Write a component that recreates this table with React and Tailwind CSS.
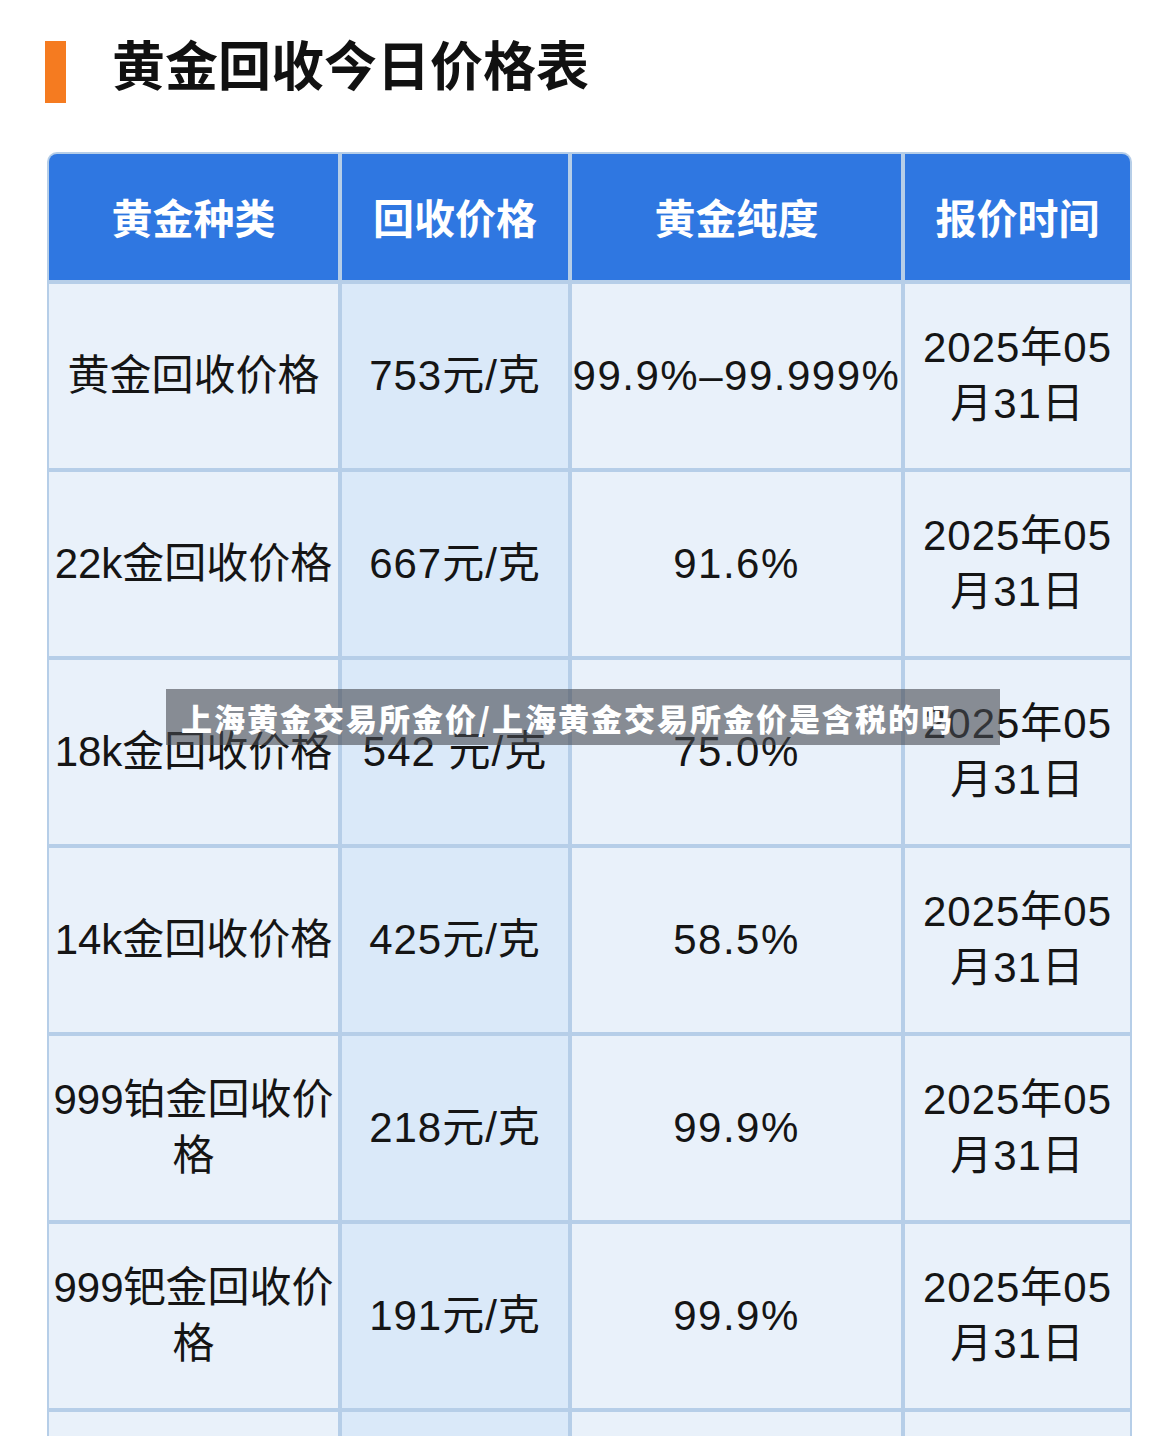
import React from 'react';

const rows = [
    { name: '黄金回收价格', price: '753元/克', purity: '99.9%–99.999%', date: true },
    { name: '22k金回收价格', price: '667元/克', purity: '91.6%', date: true },
    { name: '18k金回收价格', price: '542 元/克', purity: '75.0%', date: true },
    { name: '14k金回收价格', price: '425元/克', purity: '58.5%', date: true },
    { name: '999铂金回收价格', price: '218元/克', purity: '99.9%', date: true },
    { name: '999钯金回收价格', price: '191元/克', purity: '99.9%', date: true },
    { name: '', price: '', purity: '', date: false },
];

const headers = ['黄金种类', '回收价格', '黄金纯度', '报价时间'];

function Cell({ children, tint }) {
    return (
        <div className={`h-[184px] flex items-center justify-center text-center text-[42px] leading-[56px] text-[#151515] ${tint ? 'bg-[#dae9f9]' : 'bg-[#e9f1fa]'}`}>
            {children}
        </div>
    );
}

export default function App() {
    return (
        <div className="relative w-[1167px] h-[1436px] overflow-hidden bg-white font-['Liberation_Sans','Noto_Sans_CJK_SC',sans-serif]">
            <div className="flex items-start pl-[45px] pt-[41px]">
                <div className="w-[21px] h-[62px] bg-[#f57b20]" />
                <h1 className="ml-[46px] -mt-[4px] text-[53px] leading-none font-bold text-[#111] font-['Noto_Sans_CJK_SC',sans-serif]">
                    黄金回收今日价格表
                </h1>
            </div>

            <div className="ml-[47px] mt-[49px] w-[1085px] bg-[#b6cee8] p-[2px] rounded-t-[10px]">
                <div className="grid grid-cols-[289px_226px_329px_225px] gap-[4px]">
                    {headers.map((h, i) => (
                        <div
                            key={h}
                            className={`h-[126px] flex items-center justify-center bg-[#2f77e1] text-white text-[41px] font-bold font-['Noto_Sans_CJK_SC',sans-serif] ${i === 0 ? 'rounded-tl-[8px]' : ''} ${i === 3 ? 'rounded-tr-[8px]' : ''}`}
                        >
                            {h}
                        </div>
                    ))}
                    {rows.map((r, i) => (
                        <React.Fragment key={i}>
                            <Cell>{r.name}</Cell>
                            <Cell tint><span className="tracking-[1px]">{r.price}</span></Cell>
                            <Cell><span className="whitespace-nowrap tracking-[1.5px]">{r.purity}</span></Cell>
                            <Cell>
                                {r.date && (
                                    <span className="tracking-[1px]">2025年05<br />月31日</span>
                                )}
                            </Cell>
                        </React.Fragment>
                    ))}
                </div>
            </div>

            <div className="absolute left-[166px] top-[689px] w-[834px] h-[56px] bg-[rgba(70,74,80,0.6)] flex items-center pl-[15px]">
                <span className="text-white text-[31px] font-black leading-none tracking-[2px] whitespace-nowrap font-['Noto_Sans_CJK_SC',sans-serif]">
                    上海黄金交易所金价/上海黄金交易所金价是含税的吗
                </span>
            </div>
        </div>
    );
}
